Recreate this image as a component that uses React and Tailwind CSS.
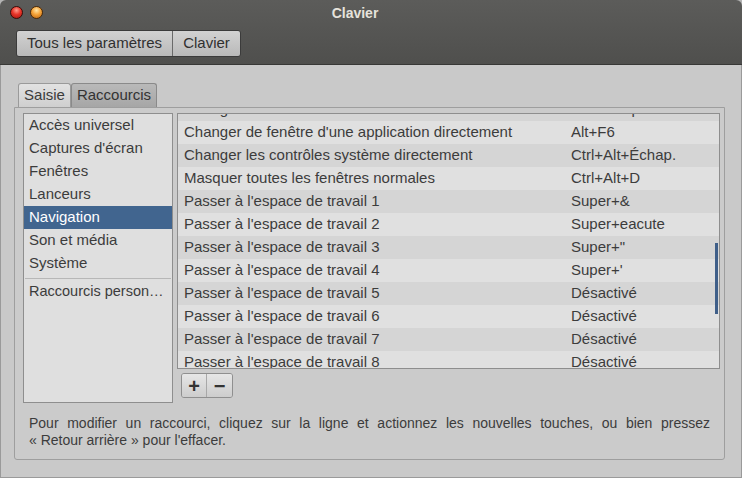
import React from 'react';

const font = { fontFamily: '"Liberation Sans", Arial, sans-serif' };

const categories = [
  'Accès universel',
  "Captures d'écran",
  'Fenêtres',
  'Lanceurs',
  'Navigation',
  'Son et média',
  'Système',
];

const shortcuts = [
  ['Changer de fenêtre directement', 'Alt+Échap'],
  ["Changer de fenêtre d'une application directement", 'Alt+F6'],
  ['Changer les contrôles système directement', 'Ctrl+Alt+Échap.'],
  ['Masquer toutes les fenêtres normales', 'Ctrl+Alt+D'],
  ["Passer à l'espace de travail 1", 'Super+&'],
  ["Passer à l'espace de travail 2", 'Super+eacute'],
  ["Passer à l'espace de travail 3", 'Super+"'],
  ["Passer à l'espace de travail 4", "Super+'"],
  ["Passer à l'espace de travail 5", 'Désactivé'],
  ["Passer à l'espace de travail 6", 'Désactivé'],
  ["Passer à l'espace de travail 7", 'Désactivé'],
  ["Passer à l'espace de travail 8", 'Désactivé'],
];

// --- Title bar + toolbar ---
function Header() {
  return (
    <div className="h-[65px] shrink-0 rounded-t-[6px] bg-gradient-to-b from-[#5c5c5a] to-[#4f4f4d] border-b border-[#383836] relative">
      <div className="h-[25px] flex items-center relative">
        <div className="absolute left-[10px] top-[6px] flex gap-[7px]">
          <span className="w-[13px] h-[13px] rounded-full border border-[#3a0c08] bg-[radial-gradient(circle_at_50%_30%,#ff9b8c_0%,#e8352a_45%,#a3140d_100%)]" />
          <span className="w-[13px] h-[13px] rounded-full border border-[#4a2a08] bg-[radial-gradient(circle_at_50%_30%,#ffe6a8_0%,#f5a43a_45%,#b9630f_100%)]" />
        </div>
        <div className="flex-1 text-center text-[14px] font-bold text-[#e6e3dc] pt-[1px] pr-[32px]">Clavier</div>
      </div>
      <div className="flex ml-[16px] mt-[5px] h-[27px] w-fit rounded-[3px] border border-[#3b3b3b] overflow-hidden text-[15px] text-[#303030]">
        <div className="w-[156px] flex items-center justify-center bg-gradient-to-b from-[#d2d2d2] to-[#b9b9b9] border-r border-[#6a6a6a]">
          Tous les paramètres
        </div>
        <div className="w-[67px] flex items-center justify-center bg-gradient-to-b from-[#d2d2d2] to-[#b9b9b9]">
          Clavier
        </div>
      </div>
    </div>
  );
}

// --- Left category list ---
function CategoryList() {
  return (
    <div className="w-[150px] h-[290px] bg-[#dfdfdf] border border-[#8e8e8e] shrink-0 flex flex-col text-[15px]">
      {categories.map((c) => (
        <div
          key={c}
          className={
            c === 'Navigation'
              ? 'h-[23px] shrink-0 flex items-center pl-[5px] bg-[#41658f] text-white'
              : 'h-[23px] shrink-0 flex items-center pl-[5px] text-[#3c3c3c]'
          }
        >
          {c}
        </div>
      ))}
      <div className="mx-[1px] mt-[3px] border-t border-[#b7b7b7]" />
      <div className="h-[23px] flex items-center pl-[5px] text-[#3c3c3c] mt-[1px] text-[14.5px] whitespace-nowrap">Raccourcis person…</div>
    </div>
  );
}

// --- Shortcuts table ---
function ShortcutTable() {
  return (
    <div className="h-[256px] bg-[#dfdfdf] border border-[#8e8e8e] overflow-hidden relative text-[15px]">
      <div className="-mt-[16px]">
        {shortcuts.map(([name, keys], i) => (
          <div
            key={name}
            className={
              i % 2 === 0
                ? 'h-[23px] flex items-center bg-[#d5d5d5] text-[#3c3c3c]'
                : 'h-[23px] flex items-center bg-[#e0e0e0] text-[#3c3c3c]'
            }
          >
            <span className="w-[393px] pl-[6px] shrink-0 whitespace-nowrap">{name}</span>
            <span className="whitespace-nowrap">{keys}</span>
          </div>
        ))}
      </div>
      <div className="absolute right-[1px] top-[129px] w-[3px] h-[71px] bg-[#3f5f89]" />
    </div>
  );
}

const Clavier = () => {
  return (
    <div className="w-[742px] h-[478px] bg-[#b4b4b4] flex flex-col" style={font}>
      <Header />
      <div className="flex-1 bg-[#c9c9c9] border-x border-b border-[#9a9a9a] flex flex-col pl-[13px] pr-[16px] pt-[18px] pb-[17px] text-[14px]">
        {/* Tabs */}
        <div className="flex ml-[4px] h-[24px] items-end text-[15px]">
          <div className="h-[24px] w-[53px] flex items-center justify-center bg-gradient-to-b from-[#e2e2e2] to-[#cfcfcf] border border-b-0 border-[#9a9a9a] rounded-t-[3px] text-[#3c3c3c]">
            Saisie
          </div>
          <div className="h-[24px] w-[86px] flex items-center justify-center bg-gradient-to-b from-[#b9b9b9] to-[#a6a6a6] border border-b-0 border-[#8a8a8a] rounded-t-[3px] text-[#333333]">
            Raccourcis
          </div>
        </div>
        {/* Notebook */}
        <div className="flex-1 border border-[#9e9e9e] rounded-b-[3px] bg-[#cbcbcb] pl-[8px] pr-[4px] pt-[5px] flex flex-col">
          <div className="flex gap-[4px]">
            <CategoryList />
            <div className="flex-1 flex flex-col">
              <ShortcutTable />
              <div className="flex ml-[4px] mt-[4px] h-[25px] w-fit rounded-[3px] border border-[#8f8f8f] overflow-hidden">
                <div className="w-[25px] flex items-center justify-center bg-gradient-to-b from-[#e6e6e6] to-[#cdcdcd] border-r border-[#a8a8a8] text-[20px] leading-none text-[#333] font-bold">+</div>
                <div className="w-[25px] flex items-center justify-center bg-gradient-to-b from-[#e6e6e6] to-[#cdcdcd] text-[20px] leading-none text-[#333] font-bold">−</div>
              </div>
            </div>
          </div>
          <div className="mt-[12px] ml-[6px] mr-[10px] leading-[17px] text-[#3c3c3c]">
            <div className="text-justify [text-align-last:justify]">
              Pour modifier un raccourci, cliquez sur la ligne et actionnez les nouvelles touches, ou bien pressez
            </div>
            <div>«&nbsp;Retour arrière&nbsp;» pour l'effacer.</div>
          </div>
        </div>
      </div>
    </div>
  );
};

export default Clavier;
